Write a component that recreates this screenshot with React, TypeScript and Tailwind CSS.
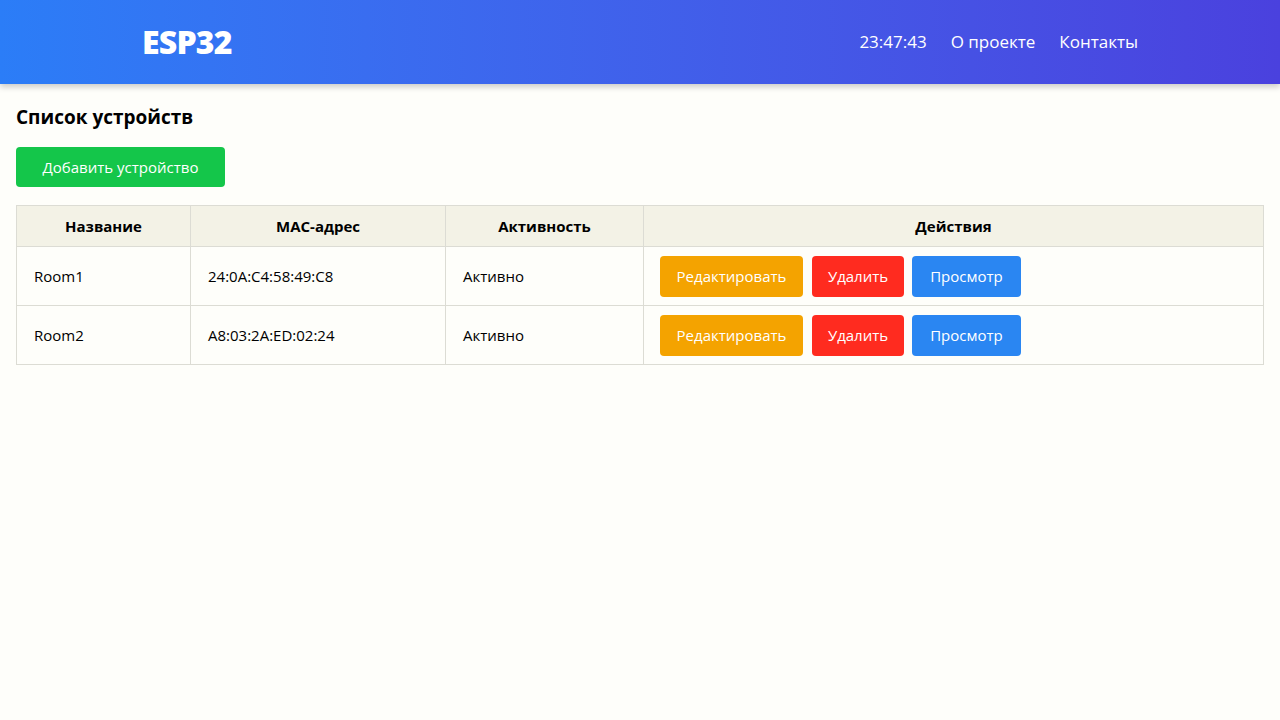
const devices = [
  { name: "Room1", mac: "24:0A:C4:58:49:C8", status: "Активно" },
  { name: "Room2", mac: "A8:03:2A:ED:02:24", status: "Активно" },
];

export default function App() {
  return (
    <div
      className="min-h-[720px] bg-[#fefefa] text-black"
      style={{ fontFamily: '"Open Sans", "Noto Sans", sans-serif' }}
    >
      <header className="h-[84px] bg-gradient-to-r from-[#2b7df7] to-[#4a41de] shadow-[0_3px_6px_rgba(0,0,0,0.2)]">
        <div className="mx-auto flex h-full w-[996px] items-center justify-between">
          <div className="text-[32px] font-extrabold tracking-tight text-white">ESP32</div>
          <nav className="flex items-center gap-6 text-[17px] text-white">
            <span>23:47:43</span>
            <a href="#">О проекте</a>
            <a href="#">Контакты</a>
          </nav>
        </div>
      </header>

      <main className="px-4 pt-[19px]">
        <h1 className="text-[19px] font-bold leading-7">Список устройств</h1>
        <button className="mt-[16px] h-[40px] w-[209px] rounded-[4px] bg-[#14c64a] text-[15px] text-white">
          Добавить устройство
        </button>

        <table className="mt-[18px] w-full border-collapse text-[15px]">
          <thead>
            <tr className="h-[41px] bg-[#f3f2e6]">
              <th className="w-[174px] border border-[#dcdcd4] font-bold">Название</th>
              <th className="w-[255px] border border-[#dcdcd4] font-bold">MAC-адрес</th>
              <th className="w-[198px] border border-[#dcdcd4] font-bold">Активность</th>
              <th className="border border-[#dcdcd4] font-bold">Действия</th>
            </tr>
          </thead>
          <tbody>
            {devices.map((d) => (
              <tr key={d.mac} className="h-[59px]">
                <td className="border border-[#dcdcd4] px-[17px]">{d.name}</td>
                <td className="border border-[#dcdcd4] px-[17px]">{d.mac}</td>
                <td className="border border-[#dcdcd4] px-[17px]">{d.status}</td>
                <td className="border border-[#dcdcd4] pl-[16px]">
                  <div className="flex">
                    <button className="h-[41px] w-[143px] rounded-[4px] bg-[#f4a300] text-white">
                      Редактировать
                    </button>
                    <button className="ml-[9px] h-[41px] w-[92px] rounded-[4px] bg-[#ff2b1f] text-white">
                      Удалить
                    </button>
                    <button className="ml-[8px] h-[41px] w-[109px] rounded-[4px] bg-[#2a86f2] text-white">
                      Просмотр
                    </button>
                  </div>
                </td>
              </tr>
            ))}
          </tbody>
        </table>
      </main>
    </div>
  );
}
